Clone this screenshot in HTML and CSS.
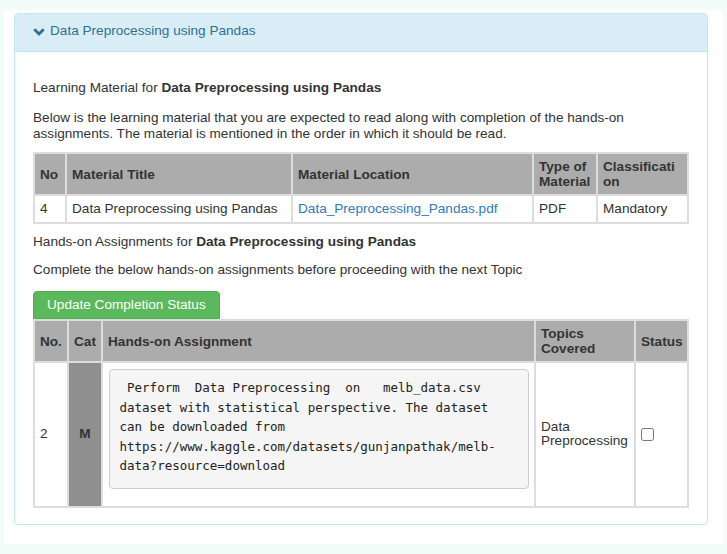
FILE: index.html
```html
<!DOCTYPE html>
<html lang="en">
<head>
<meta charset="utf-8">
<title>Data Preprocessing using Pandas</title>
<link rel="stylesheet" href="styles.css">
</head>
<body>
<div class="page">
  <div class="panel">
    <div class="panel-heading">
      <svg class="chev" width="12" height="12" viewBox="0 0 12 12"><path d="M1.3 3.2 L6 7.9 L10.7 3.2" fill="none" stroke="#31708f" stroke-width="2.8"/></svg>
      <span>Data Preprocessing using Pandas</span>
    </div>
    <div class="panel-body">
      <p class="p1">Learning Material for <b>Data Preprocessing using Pandas</b></p>
      <p class="p2">Below is the learning material that you are expected to read along with completion of the hands-on assignments. The material is mentioned in the order in which it should be read.</p>
      <table class="grid t1">
        <colgroup><col class="c1"><col class="c2"><col class="c3"><col class="c4"><col class="c5"></colgroup>
        <thead>
          <tr><th>No</th><th>Material Title</th><th>Material Location</th><th>Type of Material</th><th class="wrap">Classification</th></tr>
        </thead>
        <tbody>
          <tr><td>4</td><td>Data Preprocessing using Pandas</td><td><a href="#">Data_Preprocessing_Pandas.pdf</a></td><td>PDF</td><td>Mandatory</td></tr>
        </tbody>
      </table>
      <p class="p3">Hands-on Assignments for <b>Data Preprocessing using Pandas</b></p>
      <p class="p4">Complete the below hands-on assignments before proceeding with the next Topic</p>
      <div class="btn-row"><button class="btn">Update Completion Status</button></div>
      <table class="grid t2">
        <colgroup><col class="d1"><col class="d2"><col class="d3"><col class="d4"><col class="d5"></colgroup>
        <thead>
          <tr><th>No.</th><th>Cat</th><th>Hands-on Assignment</th><th>Topics Covered</th><th>Status</th></tr>
        </thead>
        <tbody>
          <tr>
            <td>2</td>
            <td class="cat">M</td>
            <td class="assign"><pre> Perform  Data Preprocessing  on   melb_data.csv
dataset with statistical perspective. The dataset
can be downloaded from
https://www.kaggle.com/datasets/gunjanpathak/melb-
data?resource=download</pre></td>
            <td class="topics">Data Preprocessing</td>
            <td class="status"><input type="checkbox"></td>
          </tr>
        </tbody>
      </table>
    </div>
  </div>
</div>
</body>
</html>
```

FILE: styles.css
```css
html, body {
  margin: 0;
  padding: 0;
}
body {
  background: #f2fcf9;
  font-family: "Liberation Sans", Arial, sans-serif;
  font-size: 13.6px;
  line-height: 16px;
  color: #333;
  height: 554px;
  overflow: hidden;
}
.page {
  margin: 10px 4px 0 4px;
  background: #fff;
  padding: 3px 15px 19px 10px;
}
.panel {
  border: 1px solid #bce8f1;
  border-radius: 4px;
  background: #fff;
}
.panel-heading {
  background: #d9edf7;
  color: #31708f;
  border-bottom: 1px solid #bce8f1;
  border-radius: 3px 3px 0 0;
  padding: 9px 18px 12px 18px;
  display: flex;
  align-items: center;
  gap: 5px;
}
.chev {
  display: block;
  margin-top: 1px;
}
.panel-body {
  padding: 28px 18px 16px 18px;
}
p {
  margin: 0;
}
.p2 {
  margin-top: 14px;
}
.grid {
  width: 656px;
  table-layout: fixed;
  border-collapse: separate;
  border-spacing: 0;
  border: 1px solid #ddd;
}
.grid th, .grid td {
  border: 1px solid #ddd;
  padding: 5px;
  text-align: left;
  vertical-align: middle;
  white-space: normal;
}
.grid th {
  background: #acacac;
  font-weight: bold;
  line-height: 15px;
  height: 30px;
}
.grid th.wrap {
  overflow-wrap: anywhere;
}
.t1 {
  margin-top: 10px;
}
.c1 { width: 32px; }
.c2 { width: 226px; }
.c3 { width: 241px; }
.c4 { width: 64px; }
.c5 { width: 91px; }
.d1 { width: 34px; }
.d2 { width: 34px; }
.d3 { width: 433px; }
.d4 { width: 100px; }
.d5 { width: 53px; }
a {
  color: #337ab7;
  text-decoration: none;
}
.p3 {
  margin-top: 10px;
}
.p4 {
  margin-top: 12px;
}
.btn-row {
  display: flex;
  margin-top: 13px;
}
.btn {
  font-family: "Liberation Sans", Arial, sans-serif;
  font-size: 13.6px;
  line-height: 16px;
  color: #fff;
  background: #5cb85c;
  border: 1px solid #4cae4c;
  border-radius: 4px 4px 0 0;
  padding: 5px 13px;
  cursor: pointer;
}
.cat {
  background: #8f8f8f;
  text-align: center !important;
  font-weight: bold;
}
.assign {
  padding: 5px 5px 5px 6px !important;
}
pre {
  margin: 1px 0 12px 0;
  background: #f5f5f5;
  border: 1px solid #ccc;
  border-radius: 4px;
  padding: 8px 9.5px 12px 9.5px;
  font-family: "DejaVu Sans Mono", Consolas, monospace;
  font-size: 12.5px;
  line-height: 19.5px;
  color: #222;
  white-space: pre-wrap;
}
.topics {
  line-height: 14px;
}
.status input {
  margin: 0 0 0 0;
  width: 13px;
  height: 13px;
  vertical-align: middle;
}
```
